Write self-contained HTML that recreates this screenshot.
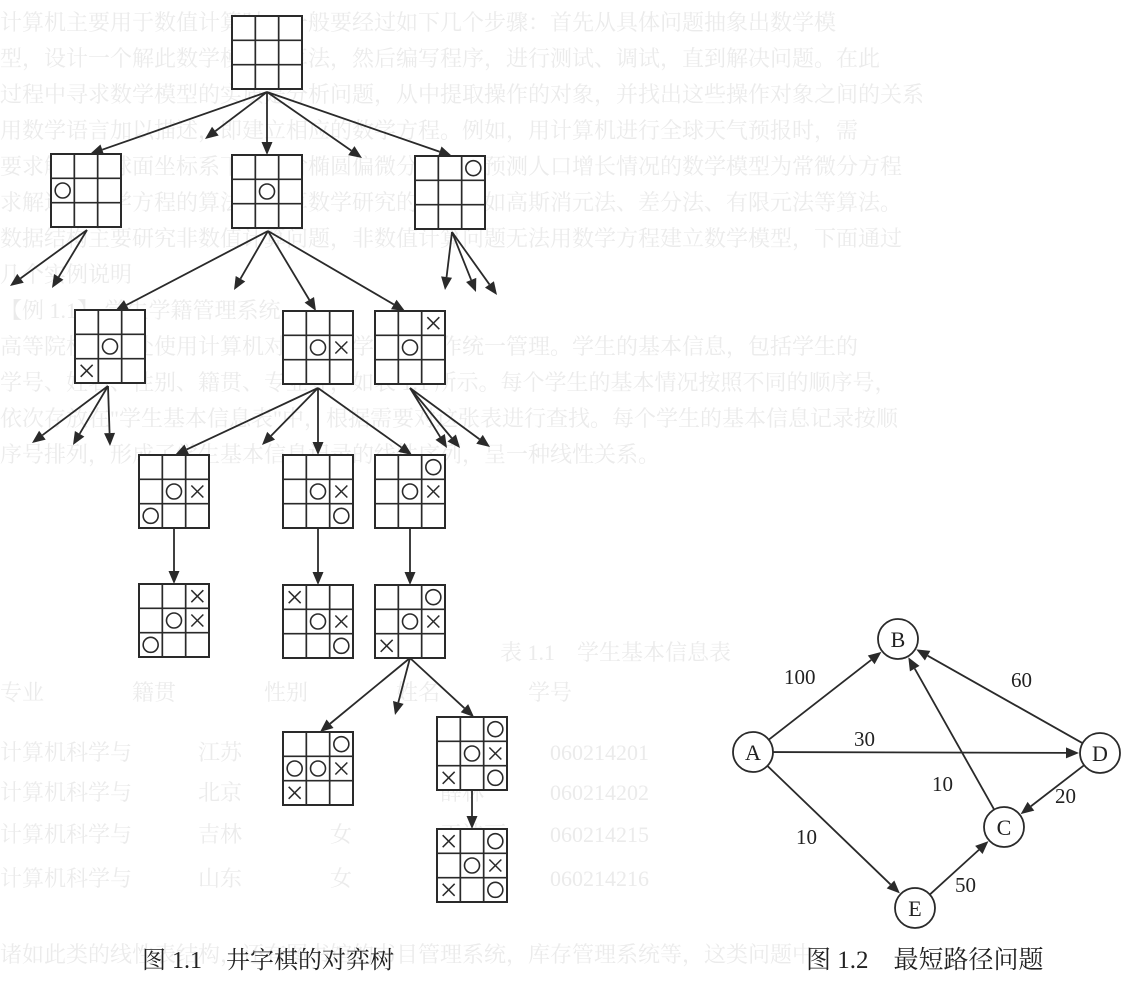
<!DOCTYPE html>
<html><head><meta charset="utf-8">
<style>
html,body{margin:0;padding:0;background:#fff;}
body{width:1130px;height:988px;overflow:hidden;position:relative;font-family:"Liberation Serif","Noto Serif CJK SC",serif;}
.bg{position:absolute;left:0;color:#ebebeb;font-size:22px;white-space:nowrap;font-family:"Liberation Serif","Noto Serif CJK SC",serif;}
svg{position:absolute;left:0;top:0;}
</style></head><body>
<div class="bg" style="top:6px">计算机主要用于数值计算时，一般要经过如下几个步骤：首先从具体问题抽象出数学模</div>
<div class="bg" style="top:42px">型，设计一个解此数学模型的算法，然后编写程序，进行测试、调试，直到解决问题。在此</div>
<div class="bg" style="top:78px">过程中寻求数学模型的实质是分析问题，从中提取操作的对象，并找出这些操作对象之间的关系</div>
<div class="bg" style="top:114px">用数学语言加以描述，即建立相应的数学方程。例如，用计算机进行全球天气预报时，需</div>
<div class="bg" style="top:150px">要求解一组球面坐标系下的二阶椭圆偏微分方程；预测人口增长情况的数学模型为常微分方程</div>
<div class="bg" style="top:186px">求解这些数学方程的算法是计算数学研究的范畴，如高斯消元法、差分法、有限元法等算法。</div>
<div class="bg" style="top:222px">数据结构主要研究非数值计算问题，非数值计算问题无法用数学方程建立数学模型，下面通过</div>
<div class="bg" style="top:258px">几个实例说明</div>
<div class="bg" style="top:294px">【例 1.1】 学生学籍管理系统</div>
<div class="bg" style="top:330px">高等院校教务处使用计算机对全校的学生情况作统一管理。学生的基本信息，包括学生的</div>
<div class="bg" style="top:366px">学号、姓名、性别、籍贯、专业等，如表 1.1 所示。每个学生的基本情况按照不同的顺序号，</div>
<div class="bg" style="top:402px">依次存放在"学生基本信息表"中，根据需要对这张表进行查找。每个学生的基本信息记录按顺</div>
<div class="bg" style="top:438px">序号排列，形成了学生基本信息记录的线性序列，呈一种线性关系。</div>
<div class="bg" style="top:636px;left:500px">表 1.1　学生基本信息表</div>
<div class="bg" style="top:676px">专业　　　　籍贯　　　　性别　　　　姓名　　　　学号</div>
<div class="bg" style="top:736px">计算机科学与　　　江苏　　　　男　　　　杨阳　　　060214201</div>
<div class="bg" style="top:776px">计算机科学与　　　北京　　　　男　　　　薛林　　　060214202</div>
<div class="bg" style="top:818px">计算机科学与　　　吉林　　　　女　　　　王诗丽　　060214215</div>
<div class="bg" style="top:862px">计算机科学与　　　山东　　　　女　　　　冯子晗　　060214216</div>
<div class="bg" style="top:938px">诸如此类的线性表结构，还有图书馆的书目管理系统，库存管理系统等，这类问题中</div>

<svg id="s" width="1130" height="988" xmlns="http://www.w3.org/2000/svg">
<text x="142" y="968" font-size="24" fill="#222" font-family="Liberation Serif, Noto Serif CJK SC, serif">图 1.1　井字棋的对弈树</text>
<text x="806" y="968" font-size="25" fill="#222" font-family="Liberation Serif, Noto Serif CJK SC, serif">图 1.2　最短路径问题</text>
</svg>
<script>
var s=document.getElementById('s'),NS='http://www.w3.org/2000/svg';
function el(t,a){var e=document.createElementNS(NS,t);for(var k in a)e.setAttribute(k,a[k]);s.appendChild(e);return e;}
var C='#2a2a2a';
function board(x,y,m){var w=70,h=73,cw=w/3,ch=h/3;
 el('rect',{x:x,y:y,width:w,height:h,fill:'#fff',stroke:C,'stroke-width':2});
 for(var i=1;i<3;i++){el('line',{x1:x+cw*i,y1:y,x2:x+cw*i,y2:y+h,stroke:C,'stroke-width':1.7});el('line',{x1:x,y1:y+ch*i,x2:x+w,y2:y+ch*i,stroke:C,'stroke-width':1.7});}
 for(var r=0;r<3;r++)for(var c=0;c<3;c++){var ch_=m[r][c],cx=x+cw*c+cw/2,cy=y+ch*r+ch/2;
  if(ch_=='O')el('circle',{cx:cx,cy:cy,r:7.5,fill:'none',stroke:C,'stroke-width':1.6});
  if(ch_=='X'){el('line',{x1:cx-6,y1:cy-6,x2:cx+6,y2:cy+6,stroke:C,'stroke-width':1.5});el('line',{x1:cx+6,y1:cy-6,x2:cx-6,y2:cy+6,stroke:C,'stroke-width':1.5});}}
}
function arr(x1,y1,x2,y2){var dx=x2-x1,dy=y2-y1,L=Math.sqrt(dx*dx+dy*dy),ux=dx/L,uy=dy/L,hl=13,hw=5.5;
 var bx=x2-ux*hl,by=y2-uy*hl;
 el('line',{x1:x1,y1:y1,x2:bx,y2:by,stroke:C,'stroke-width':1.8});
 el('polygon',{points:x2+','+y2+' '+(bx-uy*hw)+','+(by+ux*hw)+' '+(bx+uy*hw)+','+(by-ux*hw),fill:C});}
[[267,92,90,154],[267,92,205,139],[267,92,267,155],[267,92,362,158],[267,92,452,156],
 [87,230,10,286],[87,230,52,288],
 [268,231,115,311],[268,231,234,290],[268,231,316,311],[268,231,405,311],
 [452,232,445,290],[452,232,476,292],[452,232,497,295],
 [108,386,32,443],[108,386,73,445],[108,386,110,446],
 [318,388,175,455],[318,388,262,445],[318,388,318,455],[318,388,412,455],
 [410,388,447,448],[410,388,460,448],[410,388,490,447],
 [174,527,174,584],[318,528,318,585],[410,528,410,585],
 [410,658,320,732],[410,658,395,715],[410,658,474,717],[472,790,472,829]
].forEach(function(a){arr.apply(null,a);});
board(232,16,['   ','   ','   ']);
board(51,154,['   ','O  ','   ']);
board(232,155,['   ',' O ','   ']);
board(415,156,['  O','   ','   ']);
board(75,310,['   ',' O ','X  ']);
board(283,311,['   ',' OX','   ']);
board(375,311,['  X',' O ','   ']);
board(139,455,['   ',' OX','O  ']);
board(283,455,['   ',' OX','  O']);
board(375,455,['  O',' OX','   ']);
board(139,584,['  X',' OX','O  ']);
board(283,585,['X  ',' OX','  O']);
board(375,585,['  O',' OX','X  ']);
board(283,732,['  O','OOX','X  ']);
board(437,717,['  O',' OX','X O']);
board(437,829,['X O',' OX','X O']);
var N={A:[753,752],B:[898,639],C:[1004,827],D:[1100,753],E:[915,908]},R=20;
function edge(a,b){var p=N[a],q=N[b],dx=q[0]-p[0],dy=q[1]-p[1],L=Math.sqrt(dx*dx+dy*dy),ux=dx/L,uy=dy/L;
 arr(p[0]+ux*R,p[1]+uy*R,q[0]-ux*(R+1),q[1]-uy*(R+1));}
edge('A','B');edge('A','D');edge('A','E');edge('C','B');edge('D','B');edge('D','C');edge('E','C');
for(var k in N){el('circle',{cx:N[k][0],cy:N[k][1],r:R,fill:'#fff',stroke:C,'stroke-width':1.8});
 var t=el('text',{x:N[k][0],y:N[k][1]+8,'text-anchor':'middle','font-size':22,fill:'#222','font-family':'Liberation Serif, serif'});t.textContent=k;}
[['100',784,684],['60',1011,687],['30',854,746],['10',932,791],['20',1055,803],['10',796,844],['50',955,892]].forEach(function(l){
 var t=el('text',{x:l[1],y:l[2],'font-size':21,fill:'#222','font-family':'Liberation Serif, serif'});t.textContent=l[0];});
</script>
</body></html>
